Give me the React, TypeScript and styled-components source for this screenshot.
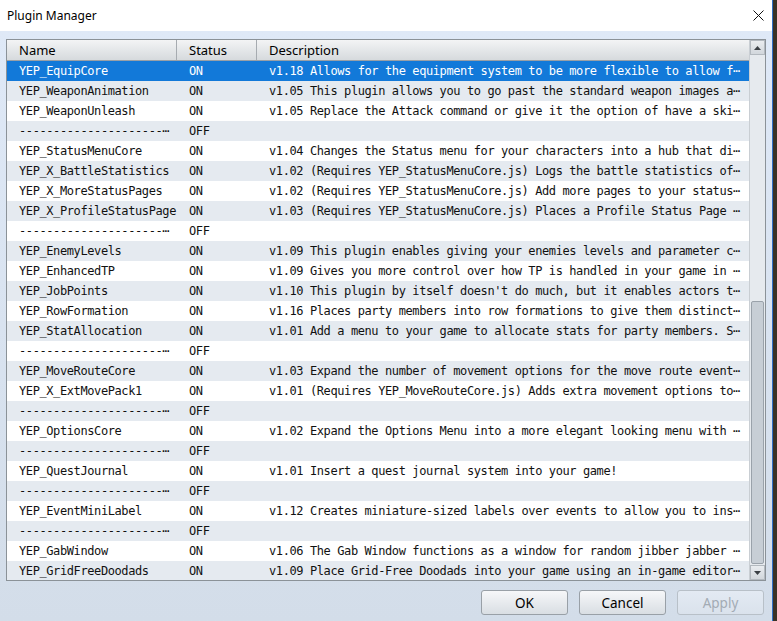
import React from "react";
import styled, { createGlobalStyle } from "styled-components";

const GlobalStyle = createGlobalStyle`
  html, body {
    margin: 0;
    padding: 0;
    background: #3a3226;
    overflow: hidden;
  }
`;

const SEP = "---------------------⋯";

type Plugin = [string, string, string];

const plugins: Plugin[] = [
  ["YEP_EquipCore", "ON", "v1.18 Allows for the equipment system to be more flexible to allow f⋯"],
  ["YEP_WeaponAnimation", "ON", "v1.05 This plugin allows you to go past the standard weapon images a⋯"],
  ["YEP_WeaponUnleash", "ON", "v1.05 Replace the Attack command or give it the option of have a ski⋯"],
  [SEP, "OFF", ""],
  ["YEP_StatusMenuCore", "ON", "v1.04 Changes the Status menu for your characters into a hub that di⋯"],
  ["YEP_X_BattleStatistics", "ON", "v1.02 (Requires YEP_StatusMenuCore.js) Logs the battle statistics of⋯"],
  ["YEP_X_MoreStatusPages", "ON", "v1.02 (Requires YEP_StatusMenuCore.js) Add more pages to your status⋯"],
  ["YEP_X_ProfileStatusPage", "ON", "v1.03 (Requires YEP_StatusMenuCore.js) Places a Profile Status Page ⋯"],
  [SEP, "OFF", ""],
  ["YEP_EnemyLevels", "ON", "v1.09 This plugin enables giving your enemies levels and parameter c⋯"],
  ["YEP_EnhancedTP", "ON", "v1.09 Gives you more control over how TP is handled in your game in ⋯"],
  ["YEP_JobPoints", "ON", "v1.10 This plugin by itself doesn't do much, but it enables actors t⋯"],
  ["YEP_RowFormation", "ON", "v1.16 Places party members into row formations to give them distinct⋯"],
  ["YEP_StatAllocation", "ON", "v1.01 Add a menu to your game to allocate stats for party members. S⋯"],
  [SEP, "OFF", ""],
  ["YEP_MoveRouteCore", "ON", "v1.03 Expand the number of movement options for the move route event⋯"],
  ["YEP_X_ExtMovePack1", "ON", "v1.01 (Requires YEP_MoveRouteCore.js) Adds extra movement options to⋯"],
  [SEP, "OFF", ""],
  ["YEP_OptionsCore", "ON", "v1.02 Expand the Options Menu into a more elegant looking menu with ⋯"],
  [SEP, "OFF", ""],
  ["YEP_QuestJournal", "ON", "v1.01 Insert a quest journal system into your game!"],
  [SEP, "OFF", ""],
  ["YEP_EventMiniLabel", "ON", "v1.12 Creates miniature-sized labels over events to allow you to ins⋯"],
  [SEP, "OFF", ""],
  ["YEP_GabWindow", "ON", "v1.06 The Gab Window functions as a window for random jibber jabber ⋯"],
  ["YEP_GridFreeDoodads", "ON", "v1.09 Place Grid-Free Doodads into your game using an in-game editor⋯"],
];

const Window = styled.div`
  width: 772px;
  height: 621px;
  border-right: 1px solid #2f6fc6;
  display: flex;
  flex-direction: column;
  font-family: "Noto Sans", "Liberation Sans", sans-serif;
  overflow: hidden;
`;

const TitleBar = styled.div`
  height: 30px;
  flex: none;
  background: #ffffff;
  display: flex;
  align-items: center;
  justify-content: space-between;
  padding: 0 8px 1px 7px;
  font-size: 12px;
  color: #000;
`;

const Body = styled.div`
  flex: 1;
  background: linear-gradient(#dfe9f7, #d3dde9);
  padding: 8px 6px 0 6px;
  display: flex;
  flex-direction: column;
`;

const TableFrame = styled.div`
  height: 540px;
  border: 1px solid #8b9298;
  display: flex;
  background: #ffffff;
  overflow: hidden;
`;

const ListArea = styled.div`
  flex: 1;
  display: flex;
  flex-direction: column;
  min-width: 0;
`;

const columns = "170px 80px 1fr";

const HeaderRow = styled.div`
  height: 20px;
  flex: none;
  display: grid;
  grid-template-columns: ${columns};
  background: linear-gradient(#f3f4f5, #d6dadd);
  border-bottom: 1px solid #9aa0a6;
`;

const HeaderCell = styled.div<{ $last?: boolean }>`
  padding-left: 12px;
  font-size: 13px;
  line-height: 20px;
  color: #000;
  border-right: ${(p) => (p.$last ? "none" : "1px solid #a6abb0")};
`;

const Row = styled.div<{ $selected?: boolean; $alt?: boolean }>`
  height: 20px;
  flex: none;
  display: grid;
  grid-template-columns: ${columns};
  background: ${(p) => (p.$selected ? "#1279d9" : p.$alt ? "#e5eaf0" : "#ffffff")};
  color: ${(p) => (p.$selected ? "#ffffff" : "#111111")};
`;

const Cell = styled.div`
  padding-left: 12px;
  font-family: "DejaVu Sans Mono", "Liberation Mono", monospace;
  font-size: 12px;
  letter-spacing: -0.4px;
  line-height: 20px;
  white-space: nowrap;
  overflow: hidden;
`;

const Scrollbar = styled.div`
  width: 15px;
  flex: none;
  display: flex;
  flex-direction: column;
  background: #e6eaee;
  border-left: 1px solid #c9ced3;
`;

const ArrowButton = styled.div`
  height: 15px;
  flex: none;
  display: flex;
  align-items: center;
  justify-content: center;
  background: linear-gradient(#e9ecef, #d2d7dc);
  border: 1px solid #b3b9bf;
  box-sizing: border-box;
`;

const Track = styled.div`
  flex: 1;
  display: flex;
  flex-direction: column;
  padding: 0 1px;
`;

const Thumb = styled.div<{ $top: number }>`
  margin-top: ${(p) => p.$top}px;
  flex: 1;
  margin-bottom: 1px;
  background: #c7ced5;
  border: 1px solid #9aa2aa;
  border-radius: 2px;
`;

const ButtonRow = styled.div`
  display: flex;
  justify-content: flex-end;
  gap: 11px;
  padding: 9px 2px 0 0;
`;

const Button = styled.button<{ $disabled?: boolean }>`
  width: 87px;
  height: 25px;
  font-family: "Noto Sans", "Liberation Sans", sans-serif;
  font-size: 13.5px;
  color: ${(p) => (p.$disabled ? "#a3abb4" : "#000")};
  background: ${(p) =>
    p.$disabled ? "linear-gradient(#e3eaf3, #dae2ec)" : "linear-gradient(#f6f7f9, #d9dee3)"};
  border: 1px solid ${(p) => (p.$disabled ? "#b8c0c8" : "#99a0a7")};
  border-radius: 3px;
  padding: 0;
`;

function Arrow({ up }: { up?: boolean }) {
  return (
    <svg width="7" height="4" viewBox="0 0 7 4">
      <polygon points={up ? "0,4 7,4 3.5,0" : "0,0 7,0 3.5,4"} fill="#3a3f44" />
    </svg>
  );
}

export default function App() {
  return (
    <>
      <GlobalStyle />
      <Window>
        <TitleBar>
          <span>Plugin Manager</span>
          <svg width="11" height="11" viewBox="0 0 11 11">
            <path d="M0.5 0.5 L10.5 10.5 M10.5 0.5 L0.5 10.5" stroke="#111" strokeWidth="1" />
          </svg>
        </TitleBar>
        <Body>
          <TableFrame>
            <ListArea>
              <HeaderRow>
                <HeaderCell>Name</HeaderCell>
                <HeaderCell>Status</HeaderCell>
                <HeaderCell $last>Description</HeaderCell>
              </HeaderRow>
              {plugins.map(([name, status, desc], i) => (
                <Row key={i} $selected={i === 0} $alt={i % 2 === 1}>
                  <Cell>{name}</Cell>
                  <Cell>{status}</Cell>
                  <Cell>{desc}</Cell>
                </Row>
              ))}
            </ListArea>
            <Scrollbar>
              <ArrowButton>
                <Arrow up />
              </ArrowButton>
              <Track>
                <Thumb $top={246} />
              </Track>
              <ArrowButton>
                <Arrow />
              </ArrowButton>
            </Scrollbar>
          </TableFrame>
          <ButtonRow>
            <Button>OK</Button>
            <Button>Cancel</Button>
            <Button $disabled>Apply</Button>
          </ButtonRow>
        </Body>
      </Window>
    </>
  );
}
